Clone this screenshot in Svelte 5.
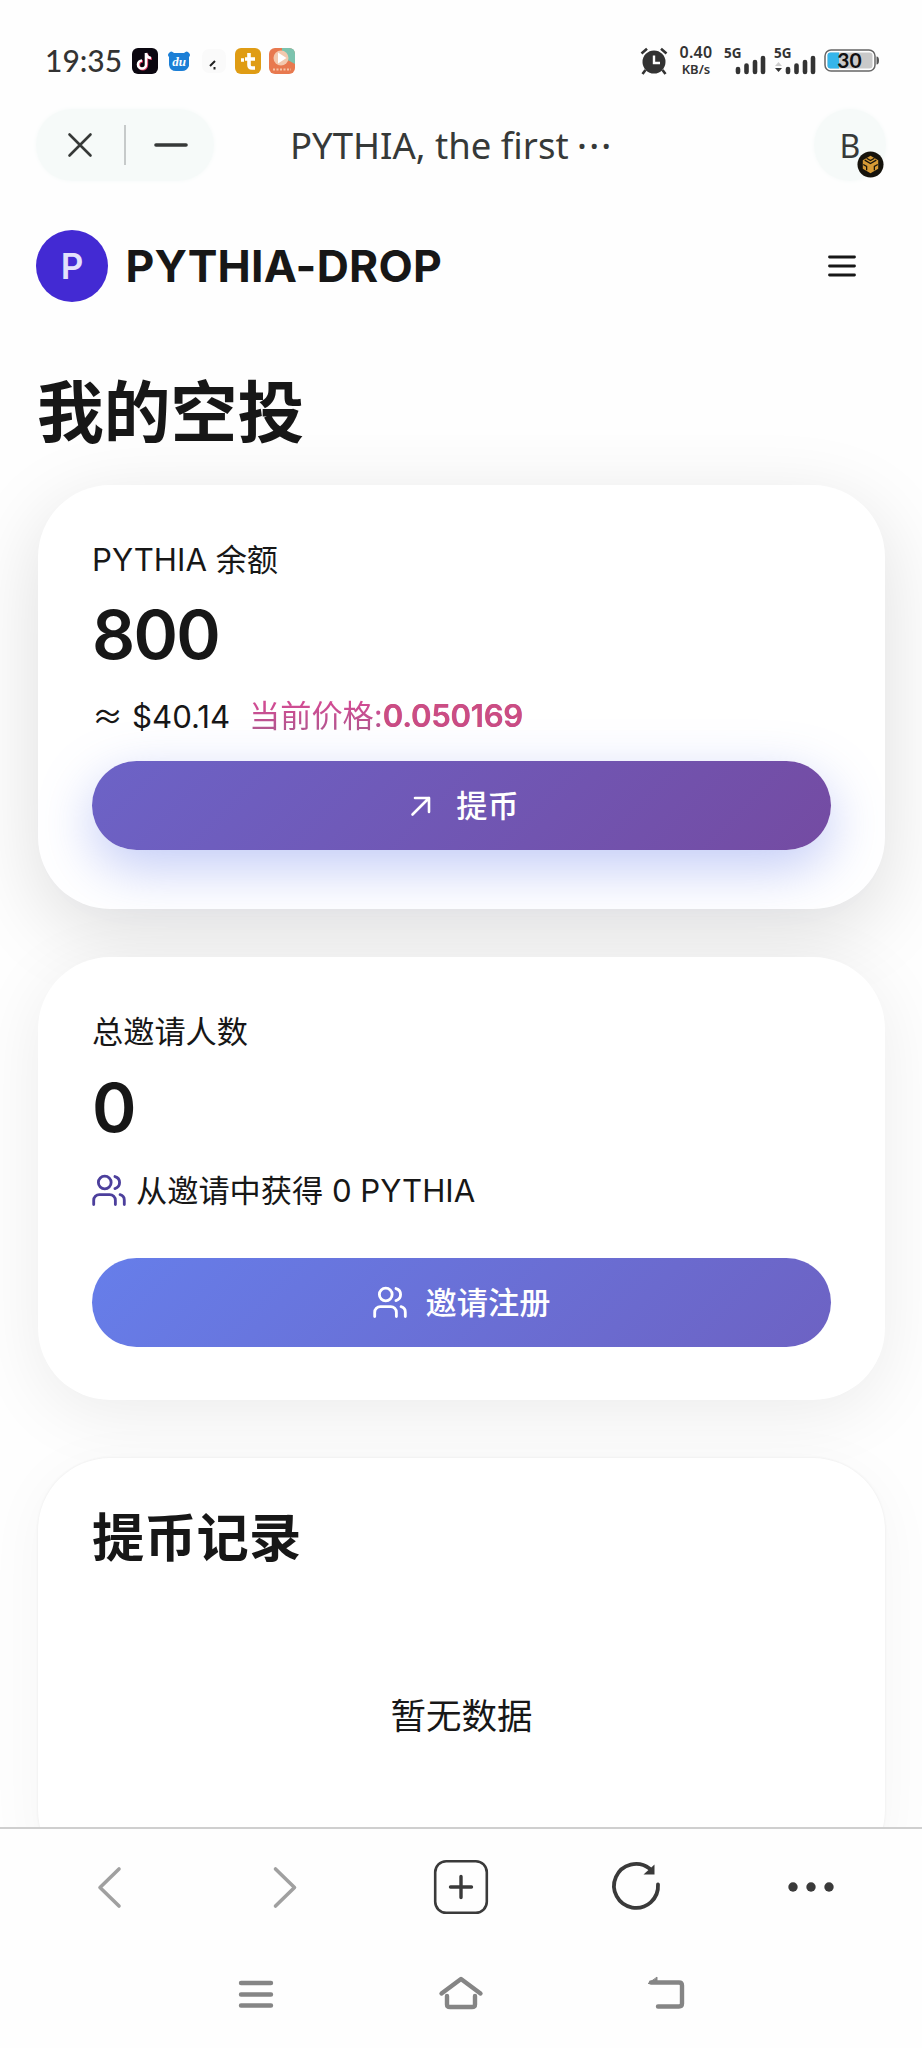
<script lang="ts">
  const balance = 800;
  const usdValue = '40.14';
  const price = '0.050169';
  const invited = 0;
  const earned = 0;

  const signals = [{ data: false }, { data: true }];
</script>

{#snippet usersIcon()}
  <svg class="users" viewBox="0 0 24 24" fill="none" stroke="currentColor" stroke-width="2" stroke-linecap="round" stroke-linejoin="round">
    <path d="M16.5 21.500v-3a4 4 0 0 0-4-4H5.200a4 4 0 0 0-4 4v3" />
    <circle cx="9" cy="6" r="4.500" />
    <path d="M22.800 21.500v-3a4 4 0 0 0-3-3.870" />
    <path d="M16.200 1.800a4.400 4.400 0 0 1 0 8.500" />
  </svg>
{/snippet}

<div class="screen">
  <div class="status-bar">
    <span class="time">19:35</span>
    <div class="apps">
      <svg viewBox="0 0 26 26">
        <rect width="26" height="26" rx="6" fill="#0b0710" />
        <path d="M14 5v11.500a4 4 0 1 1-4-4M14 5c.3 3 2.300 4.800 5 5" fill="none" stroke="#e0355f" stroke-width="2.600" transform="translate(.9 .7)" />
        <path d="M14 5v11.500a4 4 0 1 1-4-4M14 5c.3 3 2.300 4.800 5 5" fill="none" stroke="#fff" stroke-width="2.600" />
      </svg>
      <svg viewBox="0 0 26 26">
        <path d="M3 5q2-3 5 0h10q3-3 5 0 2 2 0 4v9q-2 5-7 5h-6q-6 0-7-6V9Q1 7 3 5z" fill="#1c7fd6" />
        <text x="13" y="18" text-anchor="middle" class="du">du</text>
      </svg>
      <svg viewBox="0 0 26 26">
        <rect x="1" y="1" width="24" height="24" rx="7" fill="#fafafa" />
        <path d="M9 18l5-5M13.500 19v2.500" stroke="#222" stroke-width="2" fill="none" />
      </svg>
      <svg viewBox="0 0 26 26">
        <rect width="26" height="26" rx="6" fill="#df9c14" />
        <path d="M14 5v12q0 3 3 3h3M10 11h10M6 12h3" stroke="#fff" stroke-width="3.600" fill="none" />
      </svg>
      <svg viewBox="0 0 26 26">
        <rect width="26" height="26" rx="6" fill="#e8794f" />
        <path d="M13 0h7q6 0 6 6v10L13 9z" fill="#7cc3ae" />
        <circle cx="12" cy="10" r="7.500" fill="#f3c9ae" />
        <path d="M9 4.500l8.500 5.500L9 15.500z" fill="#fff" />
        <path d="M4 21.500h18" stroke="#f5c5a8" stroke-width="2" stroke-dasharray="2 1.500" />
      </svg>
    </div>
    <div class="indicators">
      <svg class="alarm" viewBox="0 0 28 28">
        <circle cx="14" cy="15" r="11.500" fill="#333" />
        <path d="M14 8.500V16h6" fill="none" stroke="#fff" stroke-width="2.400" />
        <path d="M1.500 6.500L7 1.800M26.500 6.500L21 1.800M5.500 23l-3 4M22.500 23l3 4" stroke="#333" stroke-width="2.600" />
      </svg>
      <div class="speed"><span>0.40</span><span>KB/s</span></div>
      {#each signals as sim}
        <svg class="signal" viewBox="0 0 42 30">
          <text x="0" y="12" class="net">5G</text>
          {#if sim.data}
            <path d="M1 20l3.500-4 3.500 4z" fill="#ccc" />
            <path d="M1 22l3.500 4 3.500-4z" fill="#333" />
          {/if}
          <path d="M14 23v3M22.500 19.500v6.500M31 16v10M39 12v14" stroke="#333" stroke-width="4.600" stroke-linecap="round" />
        </svg>
      {/each}
      <svg class="battery" viewBox="0 0 56 24">
        <rect x="1" y="1" width="50" height="21" rx="6" fill="#fff" stroke="#666" stroke-width="1.500" />
        <rect x="3.500" y="3.500" width="45" height="16" rx="3" fill="#c9c9c9" />
        <path d="M6.500 3.500H15v16H6.500q-3 0-3-3v-10q0-3 3-3z" fill="#35b5ea" />
        <path d="M52.500 7.500q2.500 0 2.500 4t-2.500 4z" fill="#555" />
        <text x="25.500" y="19" text-anchor="middle" class="charge">30</text>
      </svg>
    </div>
  </div>

  <div class="title-bar">
    <div class="window-pill">
      <svg viewBox="0 0 24 24"><path d="M1.500 1.500l21 21M22.500 1.500l-21 21" /></svg>
      <i></i>
      <svg class="minus" viewBox="0 0 34 24"><path d="M2 12h30" /></svg>
    </div>
    <span class="page-title">PYTHIA, the first <b>···</b></span>
    <div class="account">
      B
      <svg class="chain" viewBox="0 0 28 28">
        <circle cx="14" cy="14" r="13.500" fill="#16130c" />
        <path d="M14 5l8 4.500v9L14 23l-8-4.500v-9z" fill="#d69a35" />
        <path d="M8 9.500l6 3.500 6-3.500M6.500 14l3.500 2v4M21.500 14L18 16v4M10 7.500l4 2.300 4-2.300" fill="none" stroke="#16130c" stroke-width="1.300" />
      </svg>
    </div>
  </div>

  <div class="page">
    <header>
      <div class="logo">P</div>
      <span class="brand">PYTHIA-DROP</span>
      <svg class="menu" viewBox="0 0 28 22"><path d="M1.500 2h25M1.500 11h25M1.500 20h25" /></svg>
    </header>

    <h1>我的空投</h1>

    <section class="card balance">
      <p class="label">PYTHIA 余额</p>
      <p class="amount">{balance}</p>
      <p class="detail">
        <span class="approx"><i>≈</i> ${usdValue}</span>
        <span class="price">当前价格:<b>{price}</b></span>
      </p>
      <button class="withdraw">
        <svg class="arrow" viewBox="0 0 20 20"><path d="M1.500 18.500L18 2M4 2h14v14" /></svg>
        提币
      </button>
    </section>

    <section class="card invites">
      <p class="label">总邀请人数</p>
      <p class="amount">{invited}</p>
      <p class="detail">
        {@render usersIcon()}
        <span class="earned">从邀请中获得 {earned} PYTHIA</span>
      </p>
      <button class="invite">
        {@render usersIcon()}
        邀请注册
      </button>
    </section>

    <section class="card records">
      <h2>提币记录</h2>
      <p class="empty">暂无数据</p>
    </section>
  </div>

  <nav class="browser-bar">
    <svg class="muted" viewBox="0 0 54 54"><path d="M36 9L17 27.500 36 46" /></svg>
    <svg class="muted" viewBox="0 0 54 54"><path d="M17.500 9L36.500 27.500 17.500 46" /></svg>
    <svg viewBox="0 0 54 54"><rect x="1.200" y="1.200" width="51.600" height="51.600" rx="11" /><path class="plus" d="M16.500 27h21M27 16.500v21" /></svg>
    <svg viewBox="0 0 54 54"><path class="ring" d="M49 24.500A22 22 0 1 1 40.500 8.500" /><path d="M34.500 14.500h11V4.500z" class="solid" /></svg>
    <svg viewBox="0 0 54 54"><g class="solid"><circle cx="9" cy="27" r="4.700" /><circle cx="27" cy="27" r="4.700" /><circle cx="45" cy="27" r="4.700" /></g></svg>
  </nav>

  <nav class="system-bar">
    <svg viewBox="0 0 44 36"><path d="M7 6h30M7 17.500h30M7 28.500h30" /></svg>
    <svg viewBox="0 0 44 36"><path d="M2.500 16.500L22 2l19.500 14.500M8 19v8.500q0 2.500 3 2.500h22q3 0 3-2.500V19" /></svg>
    <svg viewBox="0 0 44 36"><path d="M14 29.500h21q3 0 3-3V8.500q0-3-3-3H7" /><path d="M13 .5v6H4.500z" class="tip" /></svg>
  </nav>
</div>

<style>
  :global(body) {
    margin: 0;
    background: #fff;
  }

  .screen {
    display: flex;
    flex-direction: column;
    width: 922px;
    height: 2048px;
    overflow: hidden;
    background: #fefefe;
    color: #171717;
    font-family: Inter, 'Noto Sans CJK SC', sans-serif;
  }

  p, h1, h2 {
    margin: 0;
  }

  svg {
    flex: none;
    overflow: visible;
  }

  .status-bar {
    display: flex;
    align-items: center;
    flex: none;
    box-sizing: border-box;
    height: 96px;
    padding: 25px 42px 0 45px;
    color: #333;
  }

  .time {
    width: 87px;
    font: 500 30px/36px Lato, sans-serif;
    white-space: nowrap;
    margin-top: -2px;
  }

  .apps {
    display: flex;
    gap: 8.300px;
  }

  .apps svg {
    width: 26px;
    height: 26px;
  }

  .du {
    font: italic bold 13px 'Liberation Serif', serif;
    fill: #fff;
  }

  .indicators {
    display: flex;
    align-items: center;
    margin-left: auto;
  }

  .alarm {
    width: 28px;
    height: 28px;
  }

  .speed {
    display: flex;
    flex-direction: column;
    align-items: center;
    width: 38px;
    margin: 0 9px 0 9px;
    font: 600 16px/17px 'Noto Sans', sans-serif;
    letter-spacing: 0.3px;
  }

  .speed span + span {
    font-size: 13px;
    letter-spacing: 0;
  }

  .signal {
    width: 42px;
    height: 30px;
    margin-right: 8px;
  }

  .net {
    font: bold 13.500px 'Noto Sans', sans-serif;
    fill: #333;
  }

  .battery {
    width: 56px;
    height: 24px;
  }

  .charge {
    font: bold 21px Lato, sans-serif;
    fill: #111;
  }

  .title-bar {
    display: flex;
    align-items: center;
    flex: none;
    height: 98px;
    padding: 0 36px;
    color: #363938;
    font-family: 'Noto Sans', sans-serif;
  }

  .window-pill {
    display: flex;
    align-items: center;
    box-sizing: border-box;
    width: 178px;
    height: 72px;
    padding-left: 32px;
    border-radius: 36px;
    background: #f6faf9;
    box-shadow: 0 0 5px #f6faf9;
  }

  .window-pill svg {
    width: 24px;
    height: 24px;
    stroke: #363938;
    stroke-width: 2.600;
    stroke-linecap: round;
  }

  .window-pill i {
    width: 2px;
    height: 40px;
    margin: 0 28px 0 32px;
    background: #c6caca;
  }

  .window-pill .minus {
    width: 34px;
    stroke-width: 3.600;
  }

  .page-title {
    margin-left: 76px;
    font-size: 36.500px;
    font-weight: 400;
    line-height: 50px;
    white-space: nowrap;
  }

  .page-title b {
    margin-left: -1px;
    font-weight: 500;
    letter-spacing: 2.200px;
  }

  .account {
    position: relative;
    width: 72px;
    height: 72px;
    margin-left: auto;
    border-radius: 50%;
    background: #f6faf9;
    box-shadow: 0 0 5px #f6faf9;
    font-size: 32px;
    font-weight: 400;
    line-height: 73px;
    text-align: center;
  }

  .chain {
    position: absolute;
    right: 2px;
    bottom: 3px;
    width: 27px;
    height: 27px;
  }

  .page {
    display: flex;
    flex-direction: column;
    flex: none;
    box-sizing: border-box;
    height: 1633px;
    padding: 36px 37px 0;
    overflow: hidden;
  }

  header {
    display: flex;
    align-items: center;
    height: 72px;
    flex: none;
  }

  .logo {
    width: 72px;
    height: 72px;
    border-radius: 50%;
    background: #432ad3;
    color: #e3e2fc;
    font-size: 35px;
    font-weight: 600;
    line-height: 72px;
    text-align: center;
    margin-left: -1px;
  }

  .brand {
    margin-left: 17.500px;
    font-size: 44.500px;
    font-weight: 700;
    letter-spacing: 0.2px;
    white-space: nowrap;
  }

  .menu {
    width: 28px;
    height: 22px;
    margin: 0 29px 0 auto;
    stroke: #171717;
    stroke-width: 2.800;
    stroke-linecap: round;
  }

  h1 {
    margin-top: 62px;
    font-size: 66.800px;
    font-weight: 700;
    line-height: 98px;
    height: 121px;
    flex: none;
  }

  .card {
    display: flex;
    flex-direction: column;
    flex: none;
    box-sizing: border-box;
    width: 847px;
    padding: 53px 54px 0;
    border-radius: 72px;
    background: #fff;
    margin-left: 1px;
  }

  .balance {
    height: 424px;
    box-shadow: 0 22px 80px rgba(0, 0, 0, 0.13);
  }

  .invites {
    height: 443px;
    margin-top: 48px;
    box-shadow: 0 14px 70px rgba(0, 0, 0, 0.075);
  }

  .records {
    height: 424px;
    margin-top: 58px;
    box-shadow: 0 0 3px rgba(0, 0, 0, 0.07), 0 10px 60px rgba(0, 0, 0, 0.04);
  }

  .label {
    font-size: 31.200px;
    line-height: 44px;
  }

  .amount {
    margin-top: 13px;
    font-size: 67.500px;
    font-weight: 600;
    line-height: 80px;
    letter-spacing: -1.800px;
  }

  .detail {
    display: flex;
    align-items: center;
    height: 44px;
    margin-top: 19px;
    font-size: 31.200px;
    line-height: 44px;
    white-space: nowrap;
  }

  .detail .users {
    color: #4c3f9c;
    margin-right: 10px;
  }

  .approx {
    width: 157px;
  }

  .approx i {
    font-family: 'Noto Sans CJK SC', sans-serif;
    font-style: normal;
  }

  .price {
    background: linear-gradient(180deg, #d24b93 20%, #b2588f 85%);
    -webkit-background-clip: text;
    background-clip: text;
    color: transparent;
  }

  .price b {
    font-weight: 600;
    letter-spacing: -0.3px;
    color: #cb4d84;
  }

  .users {
    width: 34px;
    height: 34px;
  }

  button {
    display: flex;
    align-items: center;
    justify-content: center;
    flex: none;
    width: 739px;
    height: 89px;
    padding: 0;
    border: 0;
    border-radius: 45px;
    color: #fff;
    font: 500 31.200px/44px Inter, 'Noto Sans CJK SC', sans-serif;
  }

  .withdraw {
    box-sizing: border-box;
    margin-top: 23px;
    padding-left: 7px;
    background: linear-gradient(135deg, #6c63c7, #744ba2);
    box-shadow: 0 18px 54px rgba(102, 126, 234, 0.4);
  }

  .invites .detail {
    margin-top: 21px;
  }

  .invites .amount {
    margin-top: 14px;
  }

  .invite {
    margin-top: 45px;
    background: linear-gradient(135deg, #667eea, #6d62c3);
  }

  .arrow {
    width: 20px;
    height: 20px;
    margin-right: 25px;
    fill: none;
    stroke: currentColor;
    stroke-width: 2.600;
    stroke-linecap: round;
    stroke-linejoin: round;
  }

  .invite .users {
    margin-right: 19px;
  }

  h2 {
    margin-top: -11px;
    font-size: 52.300px;
    font-weight: 600;
    line-height: 76px;
  }

  .empty {
    margin-top: 115px;
    font-size: 35.500px;
    line-height: 52px;
    text-align: center;
  }

  .browser-bar {
    display: flex;
    align-items: center;
    justify-content: space-between;
    flex: none;
    box-sizing: border-box;
    height: 120px;
    padding: 0 84px 2px 83px;
    border-top: 2px solid #cfcfcf;
    background: #fefefe;
  }

  .browser-bar svg {
    width: 54px;
    height: 54px;
    fill: none;
    stroke: #3a3a3a;
    stroke-width: 2.600;
    stroke-linecap: round;
    stroke-linejoin: round;
  }

  .browser-bar .muted {
    stroke: #a0a0a0;
    stroke-width: 3.600;
  }

  .browser-bar .plus {
    stroke-width: 3.400;
  }

  .browser-bar .ring {
    stroke-width: 3.800;
  }

  .browser-bar .solid {
    fill: #3a3a3a;
    stroke: none;
  }

  .system-bar {
    display: flex;
    justify-content: center;
    gap: 161px;
    padding-top: 30px;
    background: #fefefe;
    flex: 1;
  }

  .system-bar svg {
    width: 44px;
    height: 36px;
    fill: none;
    stroke: #858585;
    stroke-width: 4.400;
    stroke-linecap: round;
    stroke-linejoin: round;
  }

  .system-bar .tip {
    fill: #858585;
    stroke-width: 1;
  }
</style>
